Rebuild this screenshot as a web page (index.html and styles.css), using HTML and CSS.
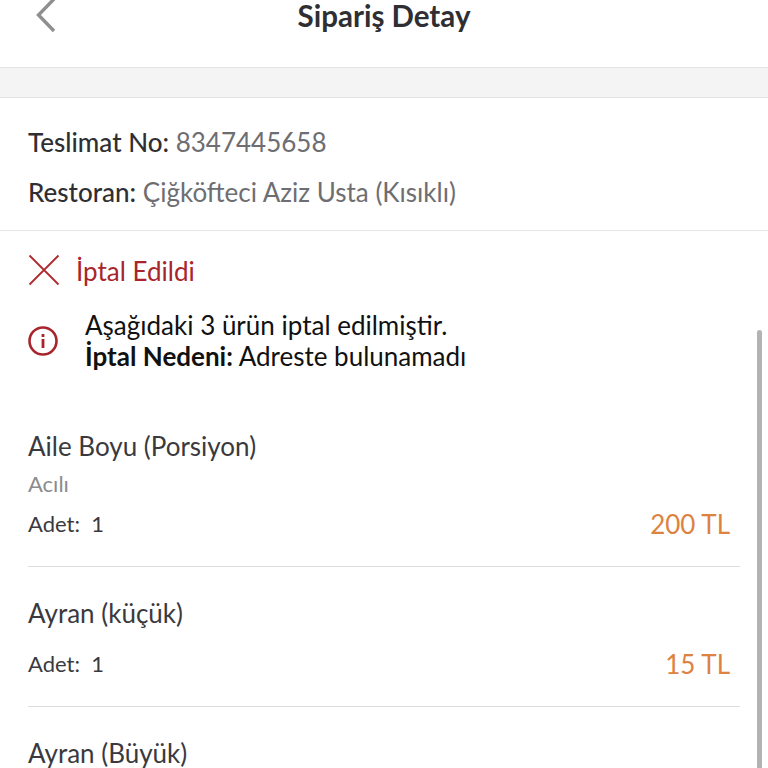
FILE: index.html
```html
<!DOCTYPE html>
<html lang="tr">
<head>
    <meta charset="UTF-8">
    <meta name="viewport" content="width=device-width, initial-scale=1.0">
    <title>Sipariş Detay</title>
    <link rel="stylesheet" href="styles.css">
</head>
<body>
    <div class="screen">
        <header class="top-bar">
            <svg class="back-icon" width="20" height="34" viewBox="0 0 20 34" aria-hidden="true">
                <path d="M18 -1 L2.500 15 L18 31" fill="none" stroke="#8f8f8f" stroke-width="3.400"/>
            </svg>
            <h1 class="page-title">Sipariş Detay</h1>
        </header>
        <div class="band"></div>

        <section class="order-info">
            <p class="info-row"><span class="info-label">Teslimat No:</span> 8347445658</p>
            <p class="info-row"><span class="info-label">Restoran:</span> Çiğköfteci Aziz Usta (Kısıklı)</p>
        </section>

        <section class="status">
            <div class="status-row">
                <svg class="status-icon" width="32" height="32" viewBox="0 0 32 32" aria-hidden="true">
                    <path d="M1.500 1.500 L30.500 30.500 M30.500 1.500 L1.500 30.500" fill="none" stroke="#b02a30" stroke-width="1.800"/>
                </svg>
                <span class="status-text">İptal Edildi</span>
            </div>
            <div class="notice">
                <svg class="notice-icon" width="30" height="30" viewBox="0 0 30 30" aria-hidden="true">
                    <circle cx="15" cy="15" r="13.500" fill="none" stroke="#a9252c" stroke-width="2.600"/>
                    <rect x="13.600" y="13" width="2.800" height="9" fill="#a9252c"/>
                    <rect x="13.600" y="8" width="2.800" height="3" fill="#a9252c"/>
                </svg>
                <p class="notice-text">Aşağıdaki 3 ürün iptal edilmiştir.<br><b>İptal Nedeni:</b> Adreste bulunamadı</p>
            </div>
        </section>

        <section class="items">
            <article class="item">
                <h2 class="item-name">Aile Boyu (Porsiyon)</h2>
                <p class="item-option">Acılı</p>
                <div class="item-foot">
                    <span class="item-qty">Adet:&nbsp; 1</span>
                    <span class="item-price">200 TL</span>
                </div>
            </article>
            <article class="item">
                <h2 class="item-name">Ayran (küçük)</h2>
                <div class="item-foot">
                    <span class="item-qty">Adet:&nbsp; 1</span>
                    <span class="item-price">15 TL</span>
                </div>
            </article>
            <article class="item">
                <h2 class="item-name">Ayran (Büyük)</h2>
            </article>
        </section>

        <div class="scrollbar"></div>
    </div>
</body>
</html>
```

FILE: styles.css
```css
* {
    box-sizing: border-box;
}

html, body {
    margin: 0;
    height: 100%;
}

body {
    background-color: #fff;
    font-family: Lato, "Open Sans", sans-serif;
    overflow: hidden;
}

.screen {
    position: relative;
    height: 768px;
    overflow: hidden;
}

.top-bar {
    position: relative;
    height: 67px;
    text-align: center;
}

.back-icon {
    position: absolute;
    top: 0;
    left: 36px;
}

.page-title {
    margin: 0;
    font-size: 29.500px;
    line-height: 32px;
    font-weight: 700;
    color: #2f2f33;
}

.band {
    height: 31px;
    background-color: #f4f4f4;
    border-top: 1px solid #e4e4e4;
    border-bottom: 1px solid #e4e4e4;
}

.order-info {
    height: 133px;
    padding: 28px 28px 0;
    border-bottom: 1px solid #e6e6e6;
}

.info-row {
    margin: 0 0 18px;
    font-size: 26px;
    line-height: 32px;
    color: #6e6e72;
}

.info-label {
    font-weight: 500;
    color: #2f2f33;
}

.status {
    padding: 23px 28px 0;
}

.status-row {
    display: flex;
    align-items: center;
    gap: 16px;
    height: 32px;
}

.status-text {
    padding-top: 2px;
    font-size: 26px;
    color: #a9252c;
}

.notice {
    display: flex;
    align-items: center;
    gap: 27px;
    margin-top: 24px;
}

.notice-text {
    margin: 0;
    font-size: 26px;
    line-height: 31px;
    color: #111;
}

.items {
    padding: 0 28px;
    margin-top: 58px;
}

.item {
    border-bottom: 1px solid #dedede;
    margin-bottom: 30px;
}

.item:last-child {
    border-bottom: 0;
}

.item-name {
    margin: 0;
    font-size: 26px;
    line-height: 32px;
    font-weight: 400;
    color: #3a3a3e;
}

.item-option {
    margin: 8px 0 0;
    font-size: 22px;
    line-height: 28px;
    color: #8b8b8f;
}

.item-foot {
    display: flex;
    justify-content: space-between;
    align-items: flex-start;
    margin-top: 18px;
    padding-right: 10px;
    height: 59px;
}

.item-option + .item-foot {
    margin-top: 9px;
}

.item-qty {
    font-size: 22px;
    line-height: 34px;
    color: #3a3a3e;
}

.item-price {
    font-size: 26px;
    line-height: 34px;
    color: #dd8240;
}

.scrollbar {
    position: absolute;
    top: 330px;
    right: 6px;
    bottom: 0;
    width: 5px;
    border-radius: 3px 3px 0 0;
    background-color: #b3b3b3;
}
```
